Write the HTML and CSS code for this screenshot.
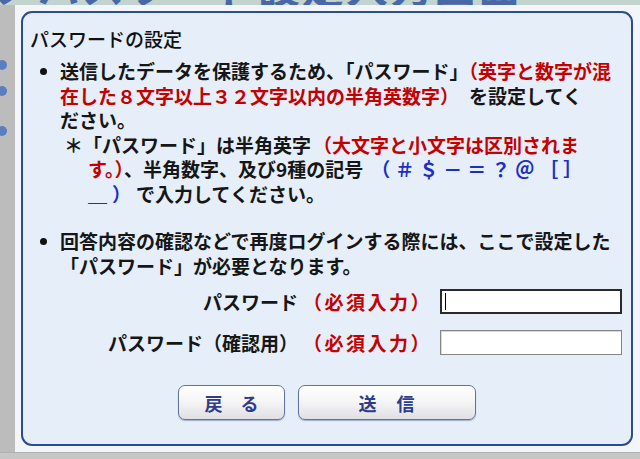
FILE: index.html
```html
<!DOCTYPE html>
<html lang="ja">
<head>
<meta charset="utf-8">
<title>パスワードの設定</title>
<link rel="stylesheet" href="styles.css">
</head>
<body>
<div class="page">
  <div class="backtitle"><span class="backtitle-text">ノパスワード設定入力画面</span></div>
  <div class="stage">
    <div class="side">
      <span class="ball ball-1"></span>
      <span class="ball ball-2"></span>
      <span class="ball ball-3"></span>
    </div>
    <div class="wrap">
      <div class="panel">
        <h1 class="title">パスワードの設定</h1>
        <ul class="notes">
          <li class="item">
            <span class="bullet-col"><span class="bullet"></span></span>
            <div class="item-body">
              <p class="line-block">送信したデータを保護するため、「パスワード」<span class="red">（英字と数字が混<br>在した８文字以上３２文字以内の半角英数字）</span><span class="gap"></span>を設定してく<br>ださい。</p>
              <p class="sub">＊「パスワード」は半角英字<span class="gap-xs"></span><span class="red">（大文字と小文字は区別されま<br>す。）</span>、半角数字、及び9種の記号<span class="gap-s"></span><span class="blue">（＃＄－＝？＠［］<br>＿）</span>で入力してください。</p>
            </div>
          </li>
          <li class="item item-2">
            <span class="bullet-col"><span class="bullet"></span></span>
            <div class="item-body">
              <p class="line-block">回答内容の確認などで再度ログインする際には、ここで設定した<br>「パスワード」が必要となります。</p>
            </div>
          </li>
        </ul>
        <div class="form">
          <div class="label">パスワード</div>
          <div class="req">（必須入力）</div>
          <div class="field is-focus"><span class="caret"></span></div>
          <div class="label">パスワード（確認用）</div>
          <div class="req">（必須入力）</div>
          <div class="field"></div>
        </div>
        <div class="actions">
          <div class="btn btn-back">戻　る</div>
          <div class="btn btn-send">送　信</div>
        </div>
      </div>
    </div>
  </div>
  <div class="bottom"></div>
</div>
</body>
</html>
```
FILE: styles.css
```css
html, body {
  margin: 0;
  padding: 0;
}
body {
  width: 640px;
  height: 459px;
  overflow: hidden;
  background: #c4c4c4;
  font-family: "Noto Sans CJK JP", "Noto Sans", sans-serif;
  color: #161616;
}
.page {
  display: flex;
  flex-direction: column;
  height: 459px;
}
.backtitle {
  height: 5px;
  overflow: hidden;
  background: #c3d4cf;
  flex: none;
}
.backtitle-text {
  display: block;
  font-size: 42px;
  line-height: 42px;
  font-weight: 700;
  color: #4a68a8;
  margin-top: -36px;
  margin-left: -6px;
  white-space: nowrap;
  letter-spacing: 2px;
}
.stage {
  display: flex;
  height: 447px;
  flex: none;
}
.side {
  width: 15px;
  flex: none;
  background: #bcbcbc;
  display: flex;
  flex-direction: column;
  overflow: hidden;
}
.ball {
  display: block;
  width: 10px;
  height: 10px;
  border-radius: 50%;
  background: #5a7fc0;
  margin-left: -3px;
  flex: none;
}
.ball-1 { margin-top: 55px; }
.ball-2 { margin-top: 16px; }
.ball-3 { margin-top: 30px; }
.wrap {
  flex: 1;
  background: #f2f6fb;
  padding: 6px 7px 6px 6px;
  display: flex;
}
.panel {
  flex: 1;
  background: #e5eef9;
  border: 2px solid #2d4c8c;
  border-radius: 11px;
  padding-top: 14px;
}
.title {
  margin: 0;
  padding-left: 7px;
  font-size: 19px;
  line-height: 24px;
  font-weight: 500;
  color: #111;
}
.notes {
  list-style: none;
  margin: 8px 0 0 0;
  padding: 0;
}
.item {
  display: flex;
  font-size: 19px;
  line-height: 24.5px;
  font-weight: 700;
}
.item-2 {
  margin-top: 23px;
}
.bullet-col {
  width: 37px;
  flex: none;
}
.bullet {
  display: block;
  width: 7px;
  height: 7px;
  border-radius: 50%;
  background: #111;
  margin: 9px 0 0 17px;
}
.item-body {
  flex: 1;
}
.line-block {
  margin: 0;
  white-space: nowrap;
}
.sub {
  margin: 0;
  padding-left: 28px;
  text-indent: -24px;
  white-space: nowrap;
}
.red {
  color: #c40000;
}
.blue {
  color: #1c2fc4;
  letter-spacing: 5px;
}
.gap {
  display: inline-block;
  width: 10px;
}
.gap-s {
  display: inline-block;
  width: 8px;
}
.gap-xs {
  display: inline-block;
  width: 2px;
}
.form {
  display: grid;
  grid-template-columns: 275px 132px 182px;
  column-gap: 5px;
  row-gap: 16px;
  margin-top: 11px;
  align-items: center;
  font-size: 19px;
  font-weight: 700;
  line-height: 25px;
}
.label {
  text-align: right;
  white-space: nowrap;
}
.req {
  color: #c40000;
  white-space: nowrap;
  letter-spacing: 2.5px;
}
.field {
  height: 25px;
  box-sizing: border-box;
  background: #fff;
  border: 1px solid #858585;
  box-shadow: inset 1px 1px 0 #d8d8d8;
  display: flex;
  align-items: center;
}
.field.is-focus {
  border: 2px solid #2a2a2a;
  box-shadow: none;
}
.caret {
  display: block;
  width: 1px;
  height: 17px;
  background: #000;
  margin-left: 3px;
}
.actions {
  display: flex;
  justify-content: center;
  gap: 13px;
  margin-top: 30px;
}
.btn {
  height: 35px;
  box-sizing: border-box;
  border: 1.5px solid #62739a;
  border-radius: 7px;
  background: linear-gradient(#ffffff 0%, #f6f6f7 45%, #e0e0e5 100%);
  box-shadow: 0 1px 1px rgba(40, 60, 110, 0.35);
  display: flex;
  align-items: center;
  justify-content: center;
  font-size: 18px;
  font-weight: 700;
  color: #2b3d8c;
}
.btn-back { width: 107px; }
.btn-send { width: 178px; letter-spacing: 1px; }
.bottom {
  flex: 1;
  background: #c6c6c6;
  border-top: 1px solid #b0b0b0;
}
```
